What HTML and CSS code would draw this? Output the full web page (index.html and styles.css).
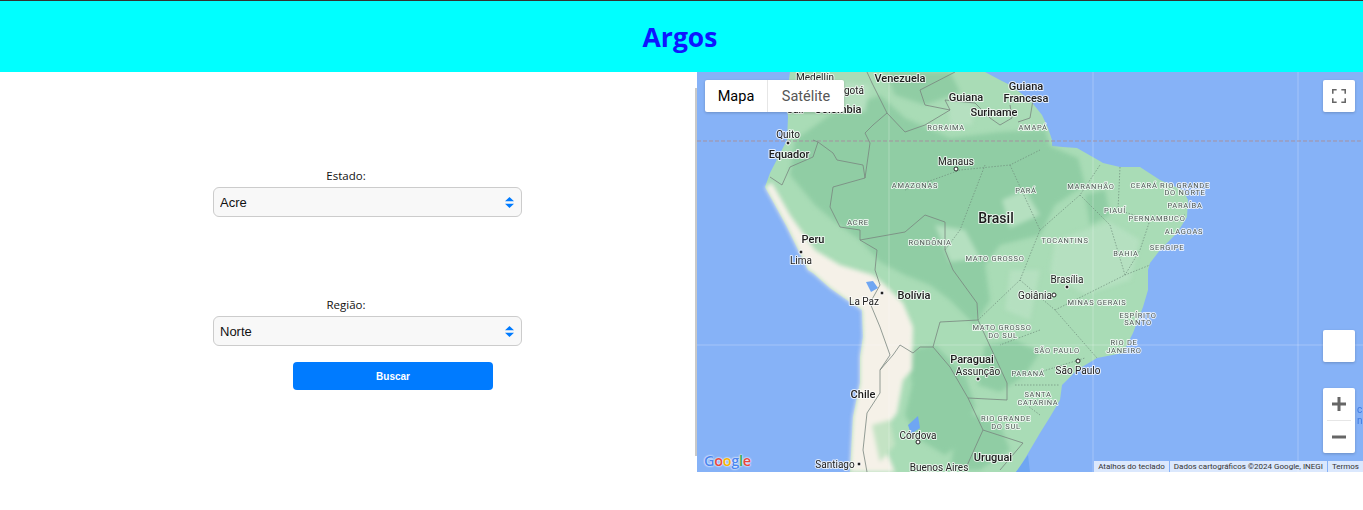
FILE: index.html
```html
<!DOCTYPE html>
<html lang="pt-BR">
<head>
    <meta charset="UTF-8">
    <title>Argos</title>
    <link rel="stylesheet" href="styles.css">
</head>
<body>
    <header class="topo">
        <h1>Argos</h1>
    </header>
    <main class="conteudo">
        <section class="filtros">
            <div class="campo">
                <label for="estado">Estado:</label>
                <div class="select-box">
                    <select id="estado"><option>Acre</option></select>
                    <svg class="setas" viewBox="0 0 9 11"><path d="M4.5 0 9 4.3H0zM4.5 11 0 6.7h9z"/></svg>
                </div>
            </div>
            <div class="campo">
                <label for="regiao">Região:</label>
                <div class="select-box">
                    <select id="regiao"><option>Norte</option></select>
                    <svg class="setas" viewBox="0 0 9 11"><path d="M4.5 0 9 4.3H0zM4.5 11 0 6.7h9z"/></svg>
                </div>
            </div>
            <button class="btn-buscar">Buscar</button>
        </section>
        <div class="divisor"></div>
        <section class="mapa">
            <svg class="mapa-fundo" viewBox="697 72 666 400">
                <rect class="mar" x="697" y="72" width="666" height="400"/>
                <!-- terra -->
                <path class="terra" d="M790 72 786 100 788 117 787 140 770 173 765 187 775 205 787 227 808 270 813 273 830 288 847 300 862 310 863 337 860 357 860 383 853 417 850 472 1016 472 1020 467 1030 450 1040 433 1050 417 1060 400 1062 385 1077 370 1097 358 1123 353 1133 333 1143 307 1148 290 1148 270 1150 263 1160 250 1177 233 1187 217 1188 200 1183 190 1160 180 1140 167 1120 167 1103 163 1098 160 1077 148 1063 147 1052 146 1052 140 1048 128 1042 115 1030 100 1010 85 1000 80 985 72z"/>
                <g class="manchas">
                    <!-- floresta -->
                    <path class="mata" d="M795 140 830 115 880 95 905 118 950 138 1000 132 1045 130 1050 146 1078 158 1085 185 1055 205 1040 235 1000 245 985 265 990 300 975 325 950 300 930 285 905 275 880 262 860 240 835 222 815 205 790 175z"/>
                    <path class="mata" d="M885 72 950 72 960 92 925 105 895 95z"/>
                    <path class="mata" d="M908 350 935 345 965 375 975 405 965 440 945 455 920 440 905 415 912 385z"/>
                    <path class="mata" d="M985 345 1015 340 1040 352 1025 375 1000 392 978 385z"/>
                    <path class="mata" d="M960 410 1000 425 1010 450 980 470 950 470z"/>
                    <path class="mata" d="M1085 195 1105 190 1110 215 1090 225z"/>
                    <path class="claro" d="M935 225 965 230 980 258 950 262z"/>
                    <path class="claro" d="M1002 200 1025 190 1040 215 1010 228z"/>
                    <path class="claro" d="M1055 240 1110 222 1140 240 1130 280 1085 295 1050 272z"/>
                    <path class="claro" d="M830 80 870 85 865 112 832 112z"/>
                    <path class="claro" d="M948 100 975 105 972 125 950 125z"/>
                    <path class="claro" d="M1010 270 1040 270 1030 320 1005 310z"/>
                    <!-- deserto e cordilheira -->
                    <path class="areia" d="M765 187 772 183 790 215 815 250 840 265 873 275 885 285 903 303 913 327 912 370 903 380 897 413 880 435 895 472 850 472 853 417 860 383 860 357 863 337 862 310 847 300 830 288 813 273 808 270 787 227z"/>
                    <path class="mancha-verde" d="M872 425 890 420 895 445 880 462z"/>
                </g>
                <path class="lago" d="M866 282 873 281 878 288 871 292z"/>
                <path class="lago" d="M908 425 918 416 920 428 911 434z"/>
                <path class="lago" d="M1016 472 1028 455 1030 472z"/>
                <!-- grade -->
                <path class="grade" d="M889 72V472M1093 72V472M1298 72V472M697 345H1363"/>
                <path class="equador" d="M697 141H1363"/>
                <!-- fronteiras -->
                <path class="fronteira" d="M770 177 782 185 790 167 813 157 818 142 833 153 837 160 863 165 865 178 833 187 830 207 840 227 860 230 860 240 877 250 875 270 880 285 870 303 880 327 890 355 880 370 880 393 867 413 863 450 867 472"/>
                <path class="fronteira" d="M813 140 818 142M865 178 870 143 865 133 873 125 887 113 872 83 867 72"/>
                <path class="fronteira" d="M887 113 905 132 925 125 950 110 925 105 920 90 955 72M950 110 945 100 975 103 990 118 1000 125 1012 118 1010 105M1033 100 1030 118 1018 122"/>
                <path class="fronteira" d="M860 240 905 232 925 215 945 222 945 250 953 270 977 303 978 320 940 322 933 347 920 347 913 353 900 345 893 355 880 370"/>
                <path class="fronteira" d="M933 347 950 367 968 398 1007 400 1007 383 978 320M968 398 983 430 1023 443 1000 470M983 430 965 470"/>
                <path class="divisa" d="M905 190 960 170 1010 165 1040 150M985 165 960 230 945 250M1010 165 1040 230 1080 195 1100 165M1040 230 1020 280 978 320M1020 280 1055 310 1097 358M1040 330 1000 345M1055 310 1125 275 1150 265M1125 275 1110 225 1080 195M1120 167 1118 210 1150 220 1185 215M1150 220 1140 250 1125 275M1040 372 1085 358M1015 385 1060 385M1040 415 1020 400"/>
                <!-- nomes -->
                <g class="nomes">
                    <text class="cidade" x="815" y="81">Medellín</text>
                    <text class="pais" x="900" y="82">Venezuela</text>
                    <text class="cidade" x="848" y="94">Bogotá</text>
                    <text class="pais" x="838" y="113">Colômbia</text>
                    <text class="cidade" x="795" y="113">Cali</text>
                    <text class="pais" x="966" y="101">Guiana</text>
                    <text class="pais" x="1026" y="90">Guiana</text>
                    <text class="pais" x="1026" y="102">Francesa</text>
                    <text class="pais" x="994" y="116">Suriname</text>
                    <text class="estado" x="946" y="130">RORAIMA</text>
                    <text class="estado" x="1033" y="130">AMAPÁ</text>
                    <text class="cidade" x="788" y="138">Quito</text>
                    <text class="pais" x="789" y="158">Equador</text>
                    <text class="cidade" x="956" y="165">Manaus</text>
                    <text class="estado" x="915" y="188">AMAZONAS</text>
                    <text class="estado" x="1026" y="193">PARÁ</text>
                    <text class="estado" x="1091" y="189">MARANHÃO</text>
                    <text class="estado" x="1144" y="188">CEARÁ</text>
                    <text class="estado" x="1185" y="188">RIO GRANDE</text>
                    <text class="estado" x="1185" y="195">DO NORTE</text>
                    <text class="estado" x="1185" y="208">PARAÍBA</text>
                    <text class="estado" x="1115" y="213">PIAUÍ</text>
                    <text class="estado" x="1157" y="221">PERNAMBUCO</text>
                    <text class="estado" x="1184" y="234">ALAGOAS</text>
                    <text class="estado" x="1065" y="243">TOCANTINS</text>
                    <text class="estado" x="1167" y="250">SERGIPE</text>
                    <text class="estado" x="1126" y="256">BAHIA</text>
                    <text class="estado" x="858" y="225">ACRE</text>
                    <text class="capital" x="996" y="223">Brasil</text>
                    <text class="estado" x="930" y="245">RONDÔNIA</text>
                    <text class="estado" x="995" y="261">MATO GROSSO</text>
                    <text class="pais" x="813" y="243">Peru</text>
                    <text class="cidade" x="801" y="264">Lima</text>
                    <text class="cidade" x="1067" y="283">Brasília</text>
                    <text class="cidade" x="1035" y="299">Goiânia</text>
                    <text class="estado" x="1097" y="305">MINAS GERAIS</text>
                    <text class="pais" x="914" y="299">Bolívia</text>
                    <text class="cidade" x="864" y="305">La Paz</text>
                    <text class="estado" x="1138" y="318">ESPÍRITO</text>
                    <text class="estado" x="1138" y="325">SANTO</text>
                    <text class="estado" x="1002" y="330">MATO GROSSO</text>
                    <text class="estado" x="1003" y="338">DO SUL</text>
                    <text class="estado" x="1124" y="345">RIO DE</text>
                    <text class="estado" x="1124" y="353">JANEIRO</text>
                    <text class="estado" x="1057" y="353">SÃO PAULO</text>
                    <text class="pais" x="972" y="363">Paraguai</text>
                    <text class="cidade" x="1078" y="374">São Paulo</text>
                    <text class="cidade" x="978" y="375">Assunção</text>
                    <text class="estado" x="1028" y="376">PARANÁ</text>
                    <text class="pais" x="863" y="398">Chile</text>
                    <text class="estado" x="1038" y="397">SANTA</text>
                    <text class="estado" x="1038" y="405">CATARINA</text>
                    <text class="estado" x="1006" y="421">RIO GRANDE</text>
                    <text class="estado" x="1006" y="429">DO SUL</text>
                    <text class="cidade" x="918" y="439">Córdova</text>
                    <text class="pais" x="993" y="461">Uruguai</text>
                    <text class="cidade" x="835" y="468">Santiago</text>
                    <text class="cidade" x="939" y="471">Buenos Aires</text>
                </g>
                <g class="pontos">
                    <circle cx="788" cy="143" r="2"/><circle cx="801" cy="252" r="2"/>
                    <circle cx="882" cy="293" r="2"/><circle cx="1067" cy="287" r="2"/>
                    <circle cx="978" cy="379" r="2"/><circle cx="859" cy="464" r="2"/>
                </g>
                <g class="pontos-vazios">
                    <circle cx="956" cy="169" r="2"/><circle cx="1054" cy="295" r="2"/>
                    <circle cx="1078" cy="361" r="2"/><circle cx="918" cy="442" r="2"/>
                </g>
                <text class="vazado" x="1357" y="413">c</text>
                <text class="vazado" x="1357" y="424">n</text>
            </svg>

            <div class="tipo-mapa">
                <button class="tipo ativo">Mapa</button>
                <button class="tipo">Satélite</button>
            </div>
            <button class="ctrl ctrl-tela">
                <svg viewBox="0 0 18 18" width="18" height="18"><path d="M1 6V1h5M12 1h5v5M17 12v5h-5M6 17H1v-5"/></svg>
            </button>
            <div class="ctrl ctrl-vazio"></div>
            <div class="ctrl-zoom">
                <button class="zoom-btn"><svg viewBox="0 0 14 14" width="14" height="14"><path d="M7 0v14M0 7h14"/></svg></button>
                <span class="zoom-linha"></span>
                <button class="zoom-btn"><svg viewBox="0 0 14 14" width="14" height="14"><path d="M0 7h14"/></svg></button>
            </div>
            <div class="logo-google"><span class="g-a">G</span><span class="g-v">o</span><span class="g-m">o</span><span class="g-a">g</span><span class="g-d">l</span><span class="g-v">e</span></div>
            <div class="creditos">
                <span>Atalhos do teclado</span>
                <span>Dados cartográficos ©2024 Google, INEGI</span>
                <span>Termos</span>
            </div>
        </section>
    </main>
</body>
</html>
```

FILE: styles.css
```css
body {
    margin: 0;
    background: #fff;
    font-family: "Open Sans", sans-serif;
    overflow: hidden;
}
.topo {
    height: 71px;
    background: #00ffff;
    border-top: 1px solid #333;
    display: flex;
    align-items: center;
    justify-content: center;
}
.topo h1 {
    margin: 0 0 0 -3px;
    font-family: "Open Sans", sans-serif;
    font-size: 26.5px;
    font-weight: 700;
    color: #0f16ff;
}
.conteudo {
    display: flex;
    height: 400px;
}
.filtros {
    width: 695px;
    box-sizing: border-box;
    padding: 96px 0 0 213px;
}
.campo {
    width: 309px;
    margin-bottom: 80px;
}
.campo:nth-of-type(2) {
    margin-bottom: 16px;
}
.campo label {
    display: block;
    width: 266px;
    height: 16px;
    margin-bottom: 3px;
    font-size: 11.5px;
    line-height: 16px;
    text-align: center;
    color: #111;
}
.select-box {
    position: relative;
}
.select-box select {
    display: block;
    width: 100%;
    height: 30px;
    padding: 0 6px;
    appearance: none;
    background: #f8f8f8;
    border: 1px solid #ccc;
    border-radius: 6px;
    font-family: "Liberation Sans", sans-serif;
    font-size: 13px;
    color: #111;
}
.setas {
    position: absolute;
    right: 8px;
    top: 10px;
    width: 9px;
    height: 11px;
    fill: #007bff;
}
.btn-buscar {
    display: block;
    width: 200px;
    height: 28px;
    margin-left: 80px;
    border: none;
    border-radius: 4px;
    background: #007bff;
    color: #fff;
    font-family: "Liberation Sans", sans-serif;
    font-size: 10px;
    font-weight: 700;
}
.divisor {
    width: 2px;
    height: 368px;
    margin-top: 16px;
    background: #c9c9c9;
}
.mapa {
    position: relative;
    width: 666px;
    height: 400px;
    overflow: hidden;
}
.mapa-fundo {
    display: block;
    width: 666px;
    height: 400px;
    filter: blur(0.35px);
}
.manchas { filter: blur(2px); }
.mar { fill: #86b2f7; }
.terra { fill: #a9dcb6; }
.mata { fill: #90cda4; }
.claro { fill: #b5e0c0; }
.areia { fill: #f5f1e8; }
.mancha-verde { fill: #c4e3c4; }
.lago { fill: #6fa6f2; }
.grade {
    fill: none;
    stroke: #fff;
    stroke-opacity: 0.25;
}
.equador {
    fill: none;
    stroke: #a5919f;
    stroke-dasharray: 4 2;
}
.fronteira {
    fill: none;
    stroke: #78857f;
    stroke-width: 0.8;
}
.divisa {
    fill: none;
    stroke: #6f8d7b;
    stroke-width: 0.7;
    stroke-dasharray: 1.5 1.5;
}
.nomes text {
    font-family: Roboto, sans-serif;
    text-anchor: middle;
    paint-order: stroke;
    stroke: rgba(255, 255, 255, 0.75);
    stroke-width: 2px;
    stroke-linejoin: round;
}
.nomes .cidade {
    font-size: 10px;
    fill: #222;
}
.nomes .pais {
    font-size: 11px;
    font-weight: 500;
    fill: #1c1c1c;
}
.nomes .capital {
    font-size: 14px;
    font-weight: 500;
    fill: #1c1c1c;
}
.nomes .estado {
    font-size: 7.5px;
    letter-spacing: 0.7px;
    fill: #505a56;
}
.pontos circle {
    fill: #222;
    stroke: #fff;
    stroke-width: 1;
}
.pontos-vazios circle {
    fill: #fff;
    stroke: #222;
    stroke-width: 1;
}
.vazado {
    font-family: Roboto, sans-serif;
    font-size: 10px;
    fill: #3f7be0;
}
.tipo-mapa {
    position: absolute;
    left: 8px;
    top: 8px;
    display: flex;
    height: 32px;
    background: #fff;
    box-shadow: 0 1px 3px rgba(0, 0, 0, 0.2);
    border-radius: 2px;
}
.tipo {
    border: none;
    background: none;
    padding: 0;
    width: 76px;
    font-family: Roboto, sans-serif;
    font-size: 14.5px;
    color: #565656;
}
.ativo {
    width: 63px;
    color: #000;
    border-right: 1px solid #e6e6e6;
}
.ctrl {
    position: absolute;
    right: 8px;
    width: 32px;
    height: 32px;
    padding: 0;
    border: none;
    background: #fff;
    border-radius: 2px;
    box-shadow: 0 1px 3px rgba(0, 0, 0, 0.2);
}
.ctrl-tela {
    top: 8px;
    display: flex;
    align-items: center;
    justify-content: center;
}
.ctrl-tela svg {
    width: 14px;
    height: 14px;
    fill: none;
    stroke: #666;
    stroke-width: 2;
}
.ctrl-vazio {
    top: 258px;
}
.ctrl-zoom {
    position: absolute;
    right: 8px;
    top: 316px;
    width: 32px;
    height: 65px;
    display: flex;
    flex-direction: column;
    align-items: center;
    background: #fff;
    border-radius: 2px;
    box-shadow: 0 1px 3px rgba(0, 0, 0, 0.2);
}
.zoom-btn {
    flex: 1;
    width: 100%;
    padding: 0;
    border: none;
    background: none;
    display: flex;
    align-items: center;
    justify-content: center;
}
.zoom-btn svg {
    fill: none;
    stroke: #666;
    stroke-width: 3;
}
.zoom-linha {
    width: 24px;
    height: 1px;
    background: #e6e6e6;
}
.logo-google {
    position: absolute;
    left: 7px;
    bottom: 2px;
    font-family: "Open Sans", sans-serif;
    font-size: 14.5px;
    font-weight: 600;
    letter-spacing: -0.3px;
    text-shadow: 0 0 2px #fff, 0 0 2px #fff;
}
.g-a { color: #4a86f0; }
.g-v { color: #e8453c; }
.g-m { color: #f5b400; }
.g-d { color: #34a853; }
.creditos {
    position: absolute;
    right: 0;
    bottom: 0;
    height: 11px;
    display: flex;
    gap: 1px;
    font-family: Roboto, sans-serif;
    font-size: 8px;
    line-height: 11px;
    color: #333;
}
.creditos span {
    padding: 0 4px;
    background: rgba(255, 255, 255, 0.7);
    white-space: nowrap;
}
```
